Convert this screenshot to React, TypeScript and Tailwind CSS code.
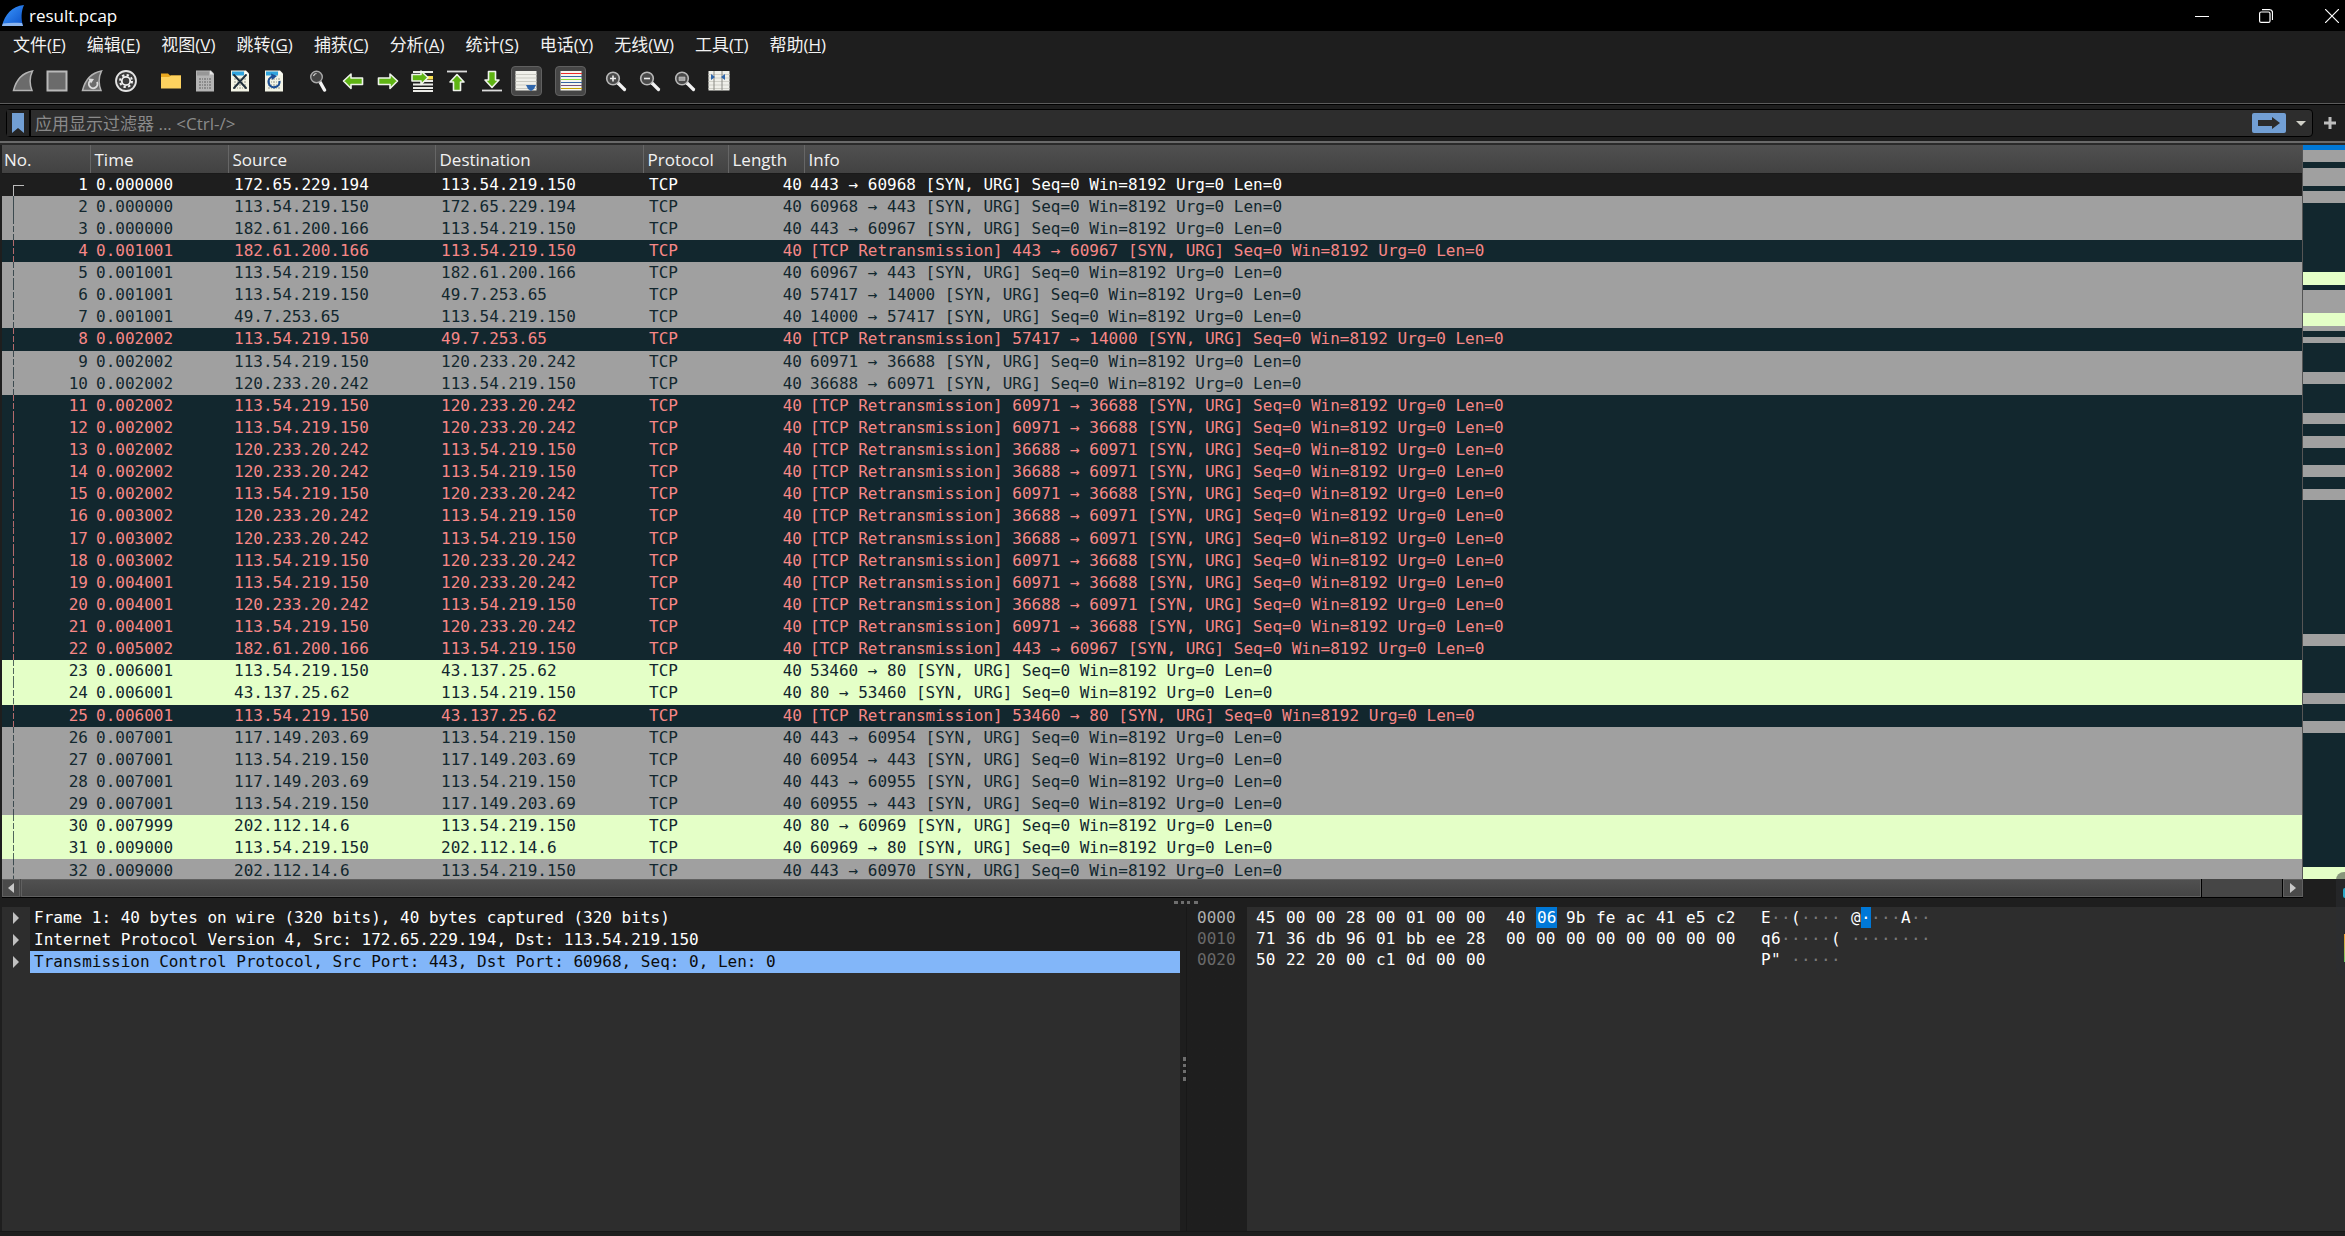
import type { ReactNode } from 'react';

type Tone = 'selected' | 'gray' | 'bad' | 'http';

interface Packet {
  time: string;
  src: string;
  dst: string;
  info: string;
  tone: Tone;
}

const HOST = '113.54.219.150';
const TAIL = '[SYN, URG] Seq=0 Win=8192 Urg=0 Len=0';

const packet = (time: string, src: string, dst: string, ports: string, tone: Tone): Packet => ({
  time,
  src,
  dst,
  tone,
  info: `${tone === 'bad' ? '[TCP Retransmission] ' : ''}${ports} ${TAIL}`,
});

const packets: Packet[] = [
  packet('0.000000', '172.65.229.194', HOST, '443 → 60968', 'selected'),
  packet('0.000000', HOST, '172.65.229.194', '60968 → 443', 'gray'),
  packet('0.000000', '182.61.200.166', HOST, '443 → 60967', 'gray'),
  packet('0.001001', '182.61.200.166', HOST, '443 → 60967', 'bad'),
  packet('0.001001', HOST, '182.61.200.166', '60967 → 443', 'gray'),
  packet('0.001001', HOST, '49.7.253.65', '57417 → 14000', 'gray'),
  packet('0.001001', '49.7.253.65', HOST, '14000 → 57417', 'gray'),
  packet('0.002002', HOST, '49.7.253.65', '57417 → 14000', 'bad'),
  packet('0.002002', HOST, '120.233.20.242', '60971 → 36688', 'gray'),
  packet('0.002002', '120.233.20.242', HOST, '36688 → 60971', 'gray'),
  packet('0.002002', HOST, '120.233.20.242', '60971 → 36688', 'bad'),
  packet('0.002002', HOST, '120.233.20.242', '60971 → 36688', 'bad'),
  packet('0.002002', '120.233.20.242', HOST, '36688 → 60971', 'bad'),
  packet('0.002002', '120.233.20.242', HOST, '36688 → 60971', 'bad'),
  packet('0.002002', HOST, '120.233.20.242', '60971 → 36688', 'bad'),
  packet('0.003002', '120.233.20.242', HOST, '36688 → 60971', 'bad'),
  packet('0.003002', '120.233.20.242', HOST, '36688 → 60971', 'bad'),
  packet('0.003002', HOST, '120.233.20.242', '60971 → 36688', 'bad'),
  packet('0.004001', HOST, '120.233.20.242', '60971 → 36688', 'bad'),
  packet('0.004001', '120.233.20.242', HOST, '36688 → 60971', 'bad'),
  packet('0.004001', HOST, '120.233.20.242', '60971 → 36688', 'bad'),
  packet('0.005002', '182.61.200.166', HOST, '443 → 60967', 'bad'),
  packet('0.006001', HOST, '43.137.25.62', '53460 → 80', 'http'),
  packet('0.006001', '43.137.25.62', HOST, '80 → 53460', 'http'),
  packet('0.006001', HOST, '43.137.25.62', '53460 → 80', 'bad'),
  packet('0.007001', '117.149.203.69', HOST, '443 → 60954', 'gray'),
  packet('0.007001', HOST, '117.149.203.69', '60954 → 443', 'gray'),
  packet('0.007001', '117.149.203.69', HOST, '443 → 60955', 'gray'),
  packet('0.007001', HOST, '117.149.203.69', '60955 → 443', 'gray'),
  packet('0.007999', '202.112.14.6', HOST, '80 → 60969', 'http'),
  packet('0.009000', HOST, '202.112.14.6', '60969 → 80', 'http'),
  packet('0.009000', '202.112.14.6', HOST, '443 → 60970', 'gray'),
];

const rowTone: Record<Tone, string> = {
  selected: 'bg-[#1e1e1e] text-white',
  gray: 'bg-[#a0a0a0] text-[#12272e]',
  bad: 'bg-[#12272e] text-[#f78787]',
  http: 'bg-[#e4ffc7] text-[#12272e]',
};

const columns = [
  { label: 'No.', width: 'w-[88px]' },
  { label: 'Time', width: 'w-[138px]' },
  { label: 'Source', width: 'w-[207px]' },
  { label: 'Destination', width: 'w-[208px]' },
  { label: 'Protocol', width: 'w-[85px]' },
  { label: 'Length', width: 'w-[76px]' },
  { label: 'Info', width: '' },
];

const menus = [
  ['文件', 'F'],
  ['编辑', 'E'],
  ['视图', 'V'],
  ['跳转', 'G'],
  ['捕获', 'C'],
  ['分析', 'A'],
  ['统计', 'S'],
  ['电话', 'Y'],
  ['无线', 'W'],
  ['工具', 'T'],
  ['帮助', 'H'],
];

// [colour, height] pairs of the overview strip, top to bottom
const stripColor: Record<string, string> = {
  b: 'bg-[#0078d7]',
  g: 'bg-[#a0a0a0]',
  d: 'bg-[#12272e]',
  h: 'bg-[#e4ffc7]',
};
const strip: [string, number][] = [
  ['b', 5], ['g', 12], ['d', 6], ['g', 18], ['d', 5], ['g', 12], ['d', 69], ['h', 13],
  ['d', 5], ['g', 23], ['h', 13], ['g', 5], ['d', 6], ['g', 6], ['d', 29], ['g', 12],
  ['d', 29], ['g', 11], ['d', 12], ['g', 12], ['d', 17], ['g', 12], ['d', 12], ['g', 11],
  ['d', 134], ['g', 12], ['d', 47], ['g', 11], ['d', 17], ['g', 12], ['d', 134], ['h', 12],
];

const hexRows = [
  { offset: '0000', bytes: '45 00 00 28 00 01 00 00 40 06 9b fe ac 41 e5 c2', ascii: 'E··(···· @····A··' },
  { offset: '0010', bytes: '71 36 db 96 01 bb ee 28 00 00 00 00 00 00 00 00', ascii: 'q6·····( ········' },
  { offset: '0020', bytes: '50 22 20 00 c1 0d 00 00', ascii: 'P" ·····' },
];

const details = [
  'Frame 1: 40 bytes on wire (320 bits), 40 bytes captured (320 bits)',
  'Internet Protocol Version 4, Src: 172.65.229.194, Dst: 113.54.219.150',
  'Transmission Control Protocol, Src Port: 443, Dst Port: 60968, Seq: 0, Len: 0',
];

const Icon = ({ children }: { children: ReactNode }) => (
  <svg viewBox="0 0 22 22" className="size-[22px]" aria-hidden="true">
    {children}
  </svg>
);

const ToolButton = ({ label, on, children }: { label: string; on?: boolean; children: ReactNode }) => (
  <button
    type="button"
    aria-label={label}
    title={label}
    className={`flex h-[30px] w-[31px] items-center justify-center rounded-sm border ${
      on ? 'border-[#606060] bg-[#464646]' : 'border-transparent'
    }`}
  >
    <Icon>{children}</Icon>
  </button>
);

const Sheet = ({ fill, head, line }: { fill: string; head: string; line: string }) => (
  <>
    <path d="M2 .5h15l3 3V21.500H2z" fill={fill} />
    <path d="M3 1.500h12v4H3z" fill={head} />
    <path d="M16 .5v4h4z" fill="#ffffff" opacity=".7" />
    <path d="M5 9h12M5 12h12M5 15h12M5 18h12" stroke={line} strokeWidth="2" strokeDasharray="2 1 1 1" />
  </>
);

const greenArrow = { fill: '#5fb414', stroke: '#eef3ea', strokeWidth: 1.6, strokeLinejoin: 'round' as const };

const Lens = ({ children }: { children?: ReactNode }) => (
  <>
    <path d="M13 13l6.500 6.500" stroke="#f2f2f2" strokeWidth="3.200" strokeLinecap="round" />
    <circle cx="8" cy="8.500" r="6.300" fill="#4a4a4a" stroke="#b9b9b9" strokeWidth="1.600" />
    {children}
  </>
);

const Fin = () => <path d="M1.500 20.500C4 10.500 9.500 3 20.500 1c-3 6-3 13-.5 19.500z" fill="#6b6b6b" stroke="#b4b4b4" strokeWidth="1.500" />;

const Toolbar = () => (
  <div className="flex h-11 items-center gap-[13px] pl-[7px]" role="toolbar">
    <div className="flex w-[135px] justify-between">
      <ToolButton label="Start capture"><Fin /></ToolButton>
      <ToolButton label="Stop capture">
        <path d="M1.500 1.500h19v19h-19z" fill="#6b6b6b" stroke="#b9b9b9" strokeWidth="2" />
      </ToolButton>
      <ToolButton label="Restart capture">
        <Fin />
        <path d="M9.500 10.500a4.300 4.300 0 1 0 6.500 1.500" fill="none" stroke="#dcdcdc" strokeWidth="1.900" />
        <path d="M7.500 8.500l5.500.5-3 4.500z" fill="#dcdcdc" />
      </ToolButton>
      <ToolButton label="Capture options">
        <circle cx="11" cy="11" r="10" fill="#3c3c3c" stroke="#e4e4e4" strokeWidth="1.800" />
        <circle cx="11" cy="11" r="6" fill="none" stroke="#f2f2f2" strokeWidth="2" strokeDasharray="2.350 2.350" />
        <circle cx="11" cy="11" r="4.200" fill="none" stroke="#f2f2f2" strokeWidth="1.800" />
      </ToolButton>
    </div>
    <div className="flex w-[135px] justify-between">
      <ToolButton label="Open">
        <path d="M1 3.500h7l2 2h11v12H1z" fill="#e9a820" />
        <path d="M1 7h8l2-1.500h10V18.500H1z" fill="#fdd25f" />
      </ToolButton>
      <ToolButton label="Save"><Sheet fill="#b4b4b4" head="#979797" line="#8a8a8a" /></ToolButton>
      <ToolButton label="Close file">
        <Sheet fill="#f3f4e6" head="#2fa4de" line="#c4c6b8" />
        <path d="M5 5l12 13M17 5L5 18" stroke="#20303c" strokeWidth="1.900" strokeLinecap="round" />
      </ToolButton>
      <ToolButton label="Reload file">
        <Sheet fill="#f3f4e6" head="#2fa4de" line="#c4c6b8" />
        <path d="M9.500 6.500A5.500 5.500 0 1 0 16.500 11" fill="none" stroke="#1d4f94" strokeWidth="2.200" />
        <path d="M8 3.500l6 2.500-5 4z" fill="#1d4f94" />
      </ToolButton>
    </div>
    <div className="flex w-[239px] justify-between">
      <ToolButton label="Find packet">
        <path d="M12 12l4.500 8" stroke="#f4f4f4" strokeWidth="3.400" strokeLinecap="round" />
        <circle cx="8.500" cy="7" r="5.800" fill="#434343" stroke="#a9a9a9" strokeWidth="1.400" />
        <path d="M5.500 6a3.500 3.500 0 0 1 3-2.500" fill="none" stroke="#d8d8d8" strokeWidth="1.200" />
      </ToolButton>
      <ToolButton label="Previous packet">
        <path d="M1.500 11L9 4v4h11.500v6.500H9v4z" {...greenArrow} />
      </ToolButton>
      <ToolButton label="Next packet">
        <path d="M20.500 11L13 4v4H1.500v6.500H13v4z" {...greenArrow} />
      </ToolButton>
      <ToolButton label="Go to packet">
        <path d="M2 2h20M2 14.500h20M2 18h20M2 21h20M12 11h10" stroke="#ecece8" strokeWidth="2" />
        <path d="M14 6h8v3.500h-8z" fill="#fbe14e" />
        <path d="M17 7.500L10 1v3.500H1v6.500h9v3.500z" {...greenArrow} />
      </ToolButton>
      <ToolButton label="First packet">
        <path d="M1 1.500h20" stroke="#dcdcdc" strokeWidth="1.800" />
        <path d="M11 4.500l7 7.500h-3.500v8.500h-7V12H4z" {...greenArrow} />
      </ToolButton>
      <ToolButton label="Last packet">
        <path d="M1 20.500h20" stroke="#dcdcdc" strokeWidth="1.800" />
        <path d="M11 17.500L4 10h3.500V1.500h7V10H18z" {...greenArrow} />
      </ToolButton>
      <ToolButton label="Auto scroll" on>
        <path d="M.5 1h21v19.500H.5z" fill="#f0f0ea" />
        <path d="M.5 4.500h21M.5 8h21M.5 11.500h21M.5 15h21M.5 18.500h21" stroke="#c9c9c1" />
        <path d="M11 15h10l-2 4-3 2-3-2z" fill="#2f66ab" />
      </ToolButton>
    </div>
    <div className="flex w-8">
      <ToolButton label="Colorize" on>
        <path d="M.5 1h21v19.500H.5z" fill="#f5f5ef" />
        <g shapeRendering="crispEdges">
          <path d="M.5 3.500h21" stroke="#ef2929" />
          <path d="M.5 6.500h21M.5 12.500h21" stroke="#3465a4" />
          <path d="M.5 9.500h21" stroke="#8ae234" />
          <path d="M.5 15.500h21" stroke="#75507b" />
          <path d="M.5 18.500h21" stroke="#c4a000" />
        </g>
      </ToolButton>
    </div>
    <div className="flex w-[135px] justify-between">
      <ToolButton label="Zoom in">
        <Lens><path d="M5 8.500h6M8 5.500v6" stroke="#ececec" strokeWidth="1.600" /></Lens>
      </ToolButton>
      <ToolButton label="Zoom out">
        <Lens><path d="M5 8.500h6" stroke="#ececec" strokeWidth="1.600" /></Lens>
      </ToolButton>
      <ToolButton label="Normal size">
        <Lens><path d="M5 7h6v3.500H5z" fill="#a4a4a4" stroke="#c8c8c8" strokeWidth=".6" /></Lens>
      </ToolButton>
      <ToolButton label="Resize columns">
        <path d="M.5 1h21v19.500H.5z" fill="#efefe9" />
        <path d="M.5 4.500h21M.5 8h21M.5 11.500h21M.5 15h21M.5 18.500h21" stroke="#cfcfc7" />
        <path d="M6 1v20M14 1v20" stroke="#8a8a84" />
        <path d="M3 4l4 3-4 3zM17 4l-4 3 4 3z" fill="#2f66ab" />
      </ToolButton>
    </div>
  </div>
);

const FilterBar = () => (
  <div className="flex h-9 items-center gap-[11px] pr-[9px] pl-[6px]">
    <div className="flex h-7 grow items-center rounded-sm border border-black bg-[#2d2d2d]">
      <button type="button" aria-label="Bookmarks" className="flex h-full w-6 items-center justify-center border-r-2 border-black bg-[#242424]">
        <svg viewBox="0 0 12 20" className="h-5 w-3" aria-hidden="true">
          <path d="M0 0h12v20l-6-5-6 5z" fill="#729fd4" />
        </svg>
      </button>
      <input
        aria-label="Display filter"
        placeholder="应用显示过滤器 ... <Ctrl-/>"
        className="h-full grow bg-transparent pl-1 outline-none placeholder:text-[#8a8a8a]"
      />
      <button type="button" aria-label="Apply filter" className="flex h-5 w-[34px] items-center justify-center rounded-xs bg-[#729fd4]">
        <svg viewBox="0 0 24 12" className="h-3 w-6" aria-hidden="true">
          <path d="M1 3h14V0l8 6-8 6V9H1z" fill="#2b2b2b" />
        </svg>
      </button>
      <button type="button" aria-label="Filter history" className="flex h-full w-[26px] items-center justify-center pl-1">
        <svg viewBox="0 0 10 5" className="h-[5px] w-[10px]" aria-hidden="true">
          <path d="M0 0h10L5 5z" fill="#d0d0c8" />
        </svg>
      </button>
    </div>
    <button type="button" aria-label="Add filter button">
      <svg viewBox="0 0 12 12" className="size-3" aria-hidden="true">
        <path d="M6 0v12M0 6h12" stroke="#bdbdbd" strokeWidth="3" />
      </svg>
    </button>
  </div>
);

const PacketTable = () => (
  <div className="h-full grow overflow-hidden">
    <table className="h-[737px] w-full table-fixed border-collapse">
      <thead>
        <tr className="h-7 bg-linear-to-b from-[#505050] to-[#424242]">
          {columns.map(col => (
            <th
              key={col.label}
              className={`${col.width} border-r border-b border-r-[#666666] border-b-[#1a1a1a] pt-[2px] pb-0 pl-1 text-left font-normal last:border-r-0 first:pl-[2px]`}
            >
              {col.label}
            </th>
          ))}
        </tr>
      </thead>
      <tbody className="font-['DejaVu_Sans_Mono',monospace] text-base leading-[22px]">
        {packets.map((p, i) => (
          <tr key={i} className={`${rowTone[p.tone]} whitespace-nowrap`}>
            <td className="relative p-0 pr-[2px] text-right">
              <svg viewBox="0 0 24 22" preserveAspectRatio="none" className="absolute top-0 left-0 h-full w-6 opacity-70" aria-hidden="true">
                {i === 0 ? (
                  <path d="M22 11.500H11.500V22" fill="none" stroke="currentColor" />
                ) : (
                  <path d="M11.500 0v22" stroke="currentColor" strokeDasharray={i === 1 ? 'none' : '6 2'} />
                )}
              </svg>
              {i + 1}
            </td>
            <td className="p-0 pl-[6px]">{p.time}</td>
            <td className="p-0 pl-[6px]">{p.src}</td>
            <td className="p-0 pl-[6px]">{p.dst}</td>
            <td className="p-0 pl-[6px]">TCP</td>
            <td className="p-0 pr-[2px] text-right">40</td>
            <td className="p-0 pl-[6px]">{p.info}</td>
          </tr>
        ))}
      </tbody>
    </table>
  </div>
);

const Scrollbar = () => (
  <div className="ml-[2px] mr-[42px] flex h-[19px] border-b border-black bg-[#464646]">
    <button type="button" aria-label="Scroll left" className="flex w-[18px] items-center justify-center border border-[#606060] bg-[#4a4a4a]">
      <svg viewBox="0 0 6 10" className="h-[10px] w-[6px]" aria-hidden="true"><path d="M6 0v10L0 5z" fill="#c8c8c8" /></svg>
    </button>
    <div className="ml-px grow border border-[#606060] bg-linear-to-b from-[#505050] to-[#454545]" />
    <div className="w-[82px] border-x border-black" />
    <button type="button" aria-label="Scroll right" className="flex w-5 items-center justify-center border border-[#606060] bg-[#4a4a4a]">
      <svg viewBox="0 0 6 10" className="h-[10px] w-[6px]" aria-hidden="true"><path d="M0 0v10l6-5z" fill="#c8c8c8" /></svg>
    </button>
  </div>
);

const Details = () => (
  <ul className="ml-[2px] bg-[#2d2d2d] font-['DejaVu_Sans_Mono',monospace] text-base leading-[22px] text-white">
    {details.map((line, i) => (
      <li key={line} className="flex">
        <button type="button" aria-label="Expand" className="flex w-7 items-center justify-center">
          <svg viewBox="0 0 6 12" className="h-3 w-[6px]" aria-hidden="true"><path d="M0 0v12l6-6z" fill="#c0c0c0" /></svg>
        </button>
        <span className={`grow pl-1 ${i === 2 ? 'bg-[#82b6f9] text-[#0b0b0b]' : 'bg-[#1e1e1e]'}`}>{line}</span>
      </li>
    ))}
  </ul>
);

const HexView = () => (
  <div className="bg-linear-to-r from-[#1e1e1e] from-[60px] to-[#2d2d2d] to-[60px] font-['DejaVu_Sans_Mono',monospace] text-base leading-[21px] text-white">
    <table className="border-collapse">
      <tbody>
        {hexRows.map((row, r) => (
          <tr key={row.offset} className="whitespace-nowrap">
            <th scope="row" className={`w-[69px] p-0 pl-[10px] text-left font-normal ${r === 0 ? 'text-[#b0b0b0]' : 'text-[#6a6a6a]'}`}>
              {row.offset}
            </th>
            <td className="w-[505px] p-0">
              <div className="flex">
                {row.bytes.split(' ').map((byte, i) => (
                  <span key={i} className={`w-[30px] ${i === 8 ? 'ml-[10px]' : ''}`}>
                    <span className={r === 0 && i === 9 ? 'inline-block bg-[#0078d7] px-px' : ''}>{byte}</span>
                  </span>
                ))}
              </div>
            </td>
            <td className="p-0">
              <div className="flex">
                {[...row.ascii].map((ch, i) => (
                  <span
                    key={i}
                    className={`h-[21px] w-[10px] ${
                      r === 0 && i === 10 ? 'bg-[#0078d7] text-white' : ch === '·' ? 'text-[#7a7a7a]' : ''
                    }`}
                  >
                    {ch}
                  </span>
                ))}
              </div>
            </td>
          </tr>
        ))}
      </tbody>
    </table>
  </div>
);

export default function App() {
  return (
    <div className="relative flex h-screen flex-col overflow-hidden bg-[#1e1e1e] font-['Open_Sans','Noto_Sans_CJK_SC',sans-serif] text-[17px] leading-6 text-[#f2f2f2]">
      <header className="flex h-[31px] items-center bg-black pl-[2px]">
        <svg viewBox="0 0 22 22" className="size-[22px]" aria-hidden="true">
          <defs>
            <linearGradient id="fin" x1="0" y1="0" x2="1" y2="1">
              <stop offset="0" stopColor="#3f9bff" />
              <stop offset="1" stopColor="#0a50c8" />
            </linearGradient>
          </defs>
          <path d="M0 21C3 9.500 9.500 1.500 22 0c-3 6.500-3 14-1 21z" fill="url(#fin)" />
          <path d="M0 21l1-2.500c6-1 13-1 19-.5l1 3z" fill="#8db6ee" />
        </svg>
        <h1 className="ml-[5px] grow text-white">result.pcap</h1>
        <button type="button" aria-label="Minimize" className="flex w-16 justify-center">
          <svg viewBox="0 0 14 14" className="size-[14px]" aria-hidden="true"><path d="M0 7.500h14" stroke="#fff" /></svg>
        </button>
        <button type="button" aria-label="Restore" className="flex w-16 justify-center">
          <svg viewBox="0 0 14 14" className="size-[14px]" fill="none" stroke="#fff" strokeWidth="1.200" aria-hidden="true">
            <rect x=".6" y="3" width="10.400" height="10.400" rx="1.500" />
            <path d="M3 .7h7.500a3 3 0 0 1 3 3V11" />
          </svg>
        </button>
        <button type="button" aria-label="Close" className="flex w-[47px] justify-end pr-[6px]">
          <svg viewBox="0 0 14 14" className="size-[14px]" aria-hidden="true"><path d="M0 0l14 14M14 0L0 14" stroke="#fff" strokeWidth="1.200" /></svg>
        </button>
      </header>

      <nav className="flex h-7 items-center gap-[21px] pl-[13px]">
        {menus.map(([name, key]) => (
          <button key={key} type="button" className="whitespace-nowrap">
            {name}(<span className="underline">{key}</span>)
          </button>
        ))}
      </nav>

      <Toolbar />
      <div className="h-[2px] border-t border-[#5c5c5c] bg-black" />
      <FilterBar />
      <div className="h-1 border-t-2 border-[#6a6a6a] bg-[#2a2a2a]" />

      <main className="flex min-h-0 grow flex-col">
        <section className="flex h-[734px] shrink-0 pl-[2px]">
          <PacketTable />
          <div className="w-[43px] shrink-0 border-l border-[#555555]">
            {strip.map(([tone, height], i) => (
              <div key={i} className={stripColor[tone]} style={{ height }} />
            ))}
          </div>
        </section>
        <Scrollbar />
        <div className="flex h-[9px] items-center justify-center pl-[26px]">
          <div className="w-6 border-t-[3px] border-dotted border-[#6e6e6e]" />
        </div>
        <section className="grid grow grid-cols-[1180fr_7px_1158fr]">
          <Details />
          <div className="flex items-center justify-end border-r border-[#181818]">
            <div className="h-6 border-l-[3px] border-dotted border-[#6e6e6e]" />
          </div>
          <HexView />
        </section>
      </main>
      <footer className="h-[5px] shrink-0 border-t border-[#181818]" />

      {/* docked helper peeking in from the screen edge */}
      <div className="absolute top-[872px] right-0 flex h-[104px] w-[9px] flex-col items-end rounded-l-lg bg-[#2b2d32]/50 pt-4">
        <span className="h-[10px] w-[2px] rounded-l-full bg-[#2aa8c8]" />
        <span className="mt-9 h-7 w-px bg-linear-to-b from-[#f0a030] to-[#60c860]" />
      </div>
    </div>
  );
}
